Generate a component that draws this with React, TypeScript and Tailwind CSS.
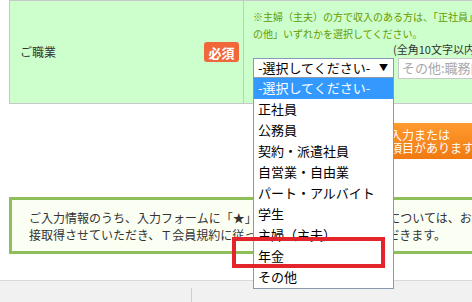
import React from "react";

const items = [
  "-選択してください-",
  "正社員",
  "公務員",
  "契約・派遣社員",
  "自営業・自由業",
  "パート・アルバイト",
  "学生",
  "主婦（主夫）",
  "年金",
  "その他",
];

export default function App() {
  return (
    <div className="relative w-[472px] h-[302px] overflow-hidden bg-white font-['Noto_Sans_CJK_JP',sans-serif] text-[#333]">
      {/* table row */}
      <div className="ml-[9px] flex h-[104px] border-y border-l border-[#c8c8c8] bg-[#ccffcc]">
        <div className="w-[234px] shrink-0 flex items-center justify-between pl-[10px] pr-[4px] border-r border-[#c8c8c8]">
          <span className="text-[12px] text-[#333]">ご職業</span>
          <span className="flex items-center justify-center w-[35px] h-[20px] rounded-[3px] bg-[#f0683a] text-white text-[13px] font-bold leading-none">
            必須
          </span>
        </div>
        <div className="flex-1 pl-[9px] pt-[7px] whitespace-nowrap">
          <p className="text-[10px] leading-[17px] text-[#669900]">
            ※主婦（主夫）の方で収入のある方は、「正社員」「その
          </p>
          <p className="text-[10px] leading-[17px] text-[#669900]">
            の他」いずれかを選択してください。
          </p>
          <p className="ml-[140px] text-[11px] leading-[14px] text-[#333]">
            (全角10文字以内)
          </p>
          <div className="flex gap-[4px] mt-[2px]">
            <div className="w-[141px] h-[21px] border border-[#7f9db9] bg-white flex items-center justify-between pl-[4px] pr-[5px] pb-[2px]">
              <span className="text-[13px] leading-none text-black">-選択してください-</span>
              <span className="text-[9px] leading-none text-black">▼</span>
            </div>
            <div className="w-[120px] h-[21px] border border-[#c8c8c8] bg-white flex items-center pl-[3px] pb-[2px]">
              <span className="text-[13px] leading-none text-[#a9a9a9]">その他:職務内容</span>
            </div>
          </div>
        </div>
      </div>

      {/* orange button */}
      <div className="mt-[19px] ml-[350px] w-[160px] h-[36px] rounded-[4px] bg-gradient-to-b from-[#ff9a2e] to-[#f07a10] text-white text-[12px] leading-[13px] pl-[28px] pt-[5px] whitespace-nowrap">
        <div>未入力または</div>
        <div>の項目があります</div>
      </div>

      {/* notice box */}
      <div className="mt-[38px] ml-[9px] w-[480px] h-[57px] border-[3px] border-[#8fbf5a] bg-[#fbfff3] pl-[17px] pt-[9px] text-[12px] leading-[17px] text-[#333] whitespace-nowrap">
        <div>ご入力情報のうち、入力フォームに「★」マークが付いている項目については、お客様</div>
        <div>接取得させていただき、Ｔ会員規約に従ってお取り扱いさせていただきます。</div>
      </div>

      {/* footer */}
      <div className="mt-[26px] h-[30px] border-t border-[#d9d9d9] bg-[#f1f1f1] flex">
        <div className="w-[192px] h-full border-r border-[#d0d0d0] mt-[7px]" />
      </div>

      {/* dropdown list */}
      <div className="absolute left-[253px] top-[77px] w-[141px] h-[212px] border border-[#8a9bb0] bg-white">
        {items.map((it, i) => (
          <div
            key={it}
            className={
              i === 0
                ? "h-[21px] flex items-center pl-[4px] pb-[3px] text-[13px] leading-none bg-[#3399ff] text-white whitespace-nowrap"
                : "h-[21px] flex items-center pl-[4px] pb-[3px] text-[13px] leading-none text-black whitespace-nowrap"
            }
          >
            {it}
          </div>
        ))}
      </div>

      {/* red highlight */}
      <div className="absolute left-[232px] top-[237px] w-[153px] h-[31px] border-[4px] border-[#e3242b]" />
    </div>
  );
}
